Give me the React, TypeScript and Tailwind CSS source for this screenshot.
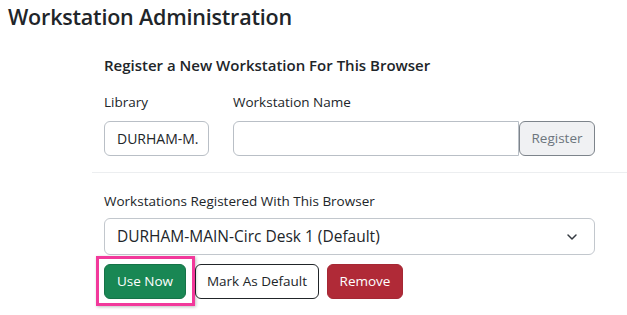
import React from 'react';
import { ChevronDown } from 'lucide-react';

const font = { fontFamily: '"Open Sans", "Noto Sans", sans-serif' };

export default function App() {
  return (
    <div className="w-[627px] h-[315px] overflow-hidden bg-white text-[#212529]" style={font}>
      <h2 className="pl-[8px] pt-[1px] text-[21.5px] font-semibold leading-[32px] tracking-[-0.2px]">
        Workstation Administration
      </h2>

      <div className="ml-[92px] mt-[22px]">
        <div className="pl-[12px] pr-[32px]">
          <h5 className="text-[15px] font-semibold leading-[20px]">
            Register a New Workstation For This Browser
          </h5>

          <div className="flex gap-[24px] mt-[17px]">
            <div className="w-[105px]">
              <label className="block text-[13.5px] leading-[20px]">Library</label>
              <div className="mt-[9px] h-[35px] border border-[#b9bfc6] rounded-[6px] px-[12px] flex items-center text-[14px] overflow-hidden whitespace-nowrap">
                DURHAM-M.
              </div>
            </div>
            <div className="flex-1">
              <label className="block text-[13.5px] leading-[20px]">Workstation Name</label>
              <div className="mt-[9px] flex h-[35px]">
                <div className="flex-1 border border-[#b9bfc6] rounded-l-[6px]" />
                <button className="w-[76px] border border-[#7d848b] rounded-[6px] bg-[#f0f1f3] text-[13.5px] text-[#6c757d]">
                  Register
                </button>
              </div>
            </div>
          </div>
        </div>

        <div className="mt-[16px] h-px bg-[#eceef0]" />

        <div className="pl-[12px] pr-[32px] mt-[18px]">
          <label className="block text-[13.5px] leading-[20px]">Workstations Registered With This Browser</label>
          <div className="mt-[7px] h-[37px] border border-[#c2c7cd] rounded-[6px] pl-[12px] pr-[14px] flex items-center justify-between text-[15.5px]">
            <span>DURHAM-MAIN-Circ Desk 1 (Default)</span>
            <ChevronDown className="w-[16px] h-[16px] text-[#343a40]" strokeWidth={2.2} />
          </div>

          <div className="mt-[9px] flex gap-[8px] text-[13.5px]">
            <div className="relative">
              <button className="h-[35px] w-[82px] rounded-[6px] bg-[#198754] border border-[#157347] text-white">
                Use Now
              </button>
              <div className="absolute left-[-8px] top-[-8px] w-[99px] h-[50px] border-[3px] border-[#f2399b] shadow-[1px_1px_3px_rgba(0,0,0,0.25)] pointer-events-none" />
            </div>
            <button className="ml-[1px] h-[35px] w-[124px] rounded-[6px] bg-white border border-[#212529]">
              Mark As Default
            </button>
            <button className="h-[35px] w-[76px] rounded-[6px] bg-[#b02a37] border border-[#a52834] text-white">
              Remove
            </button>
          </div>
        </div>
      </div>
    </div>
  );
}
